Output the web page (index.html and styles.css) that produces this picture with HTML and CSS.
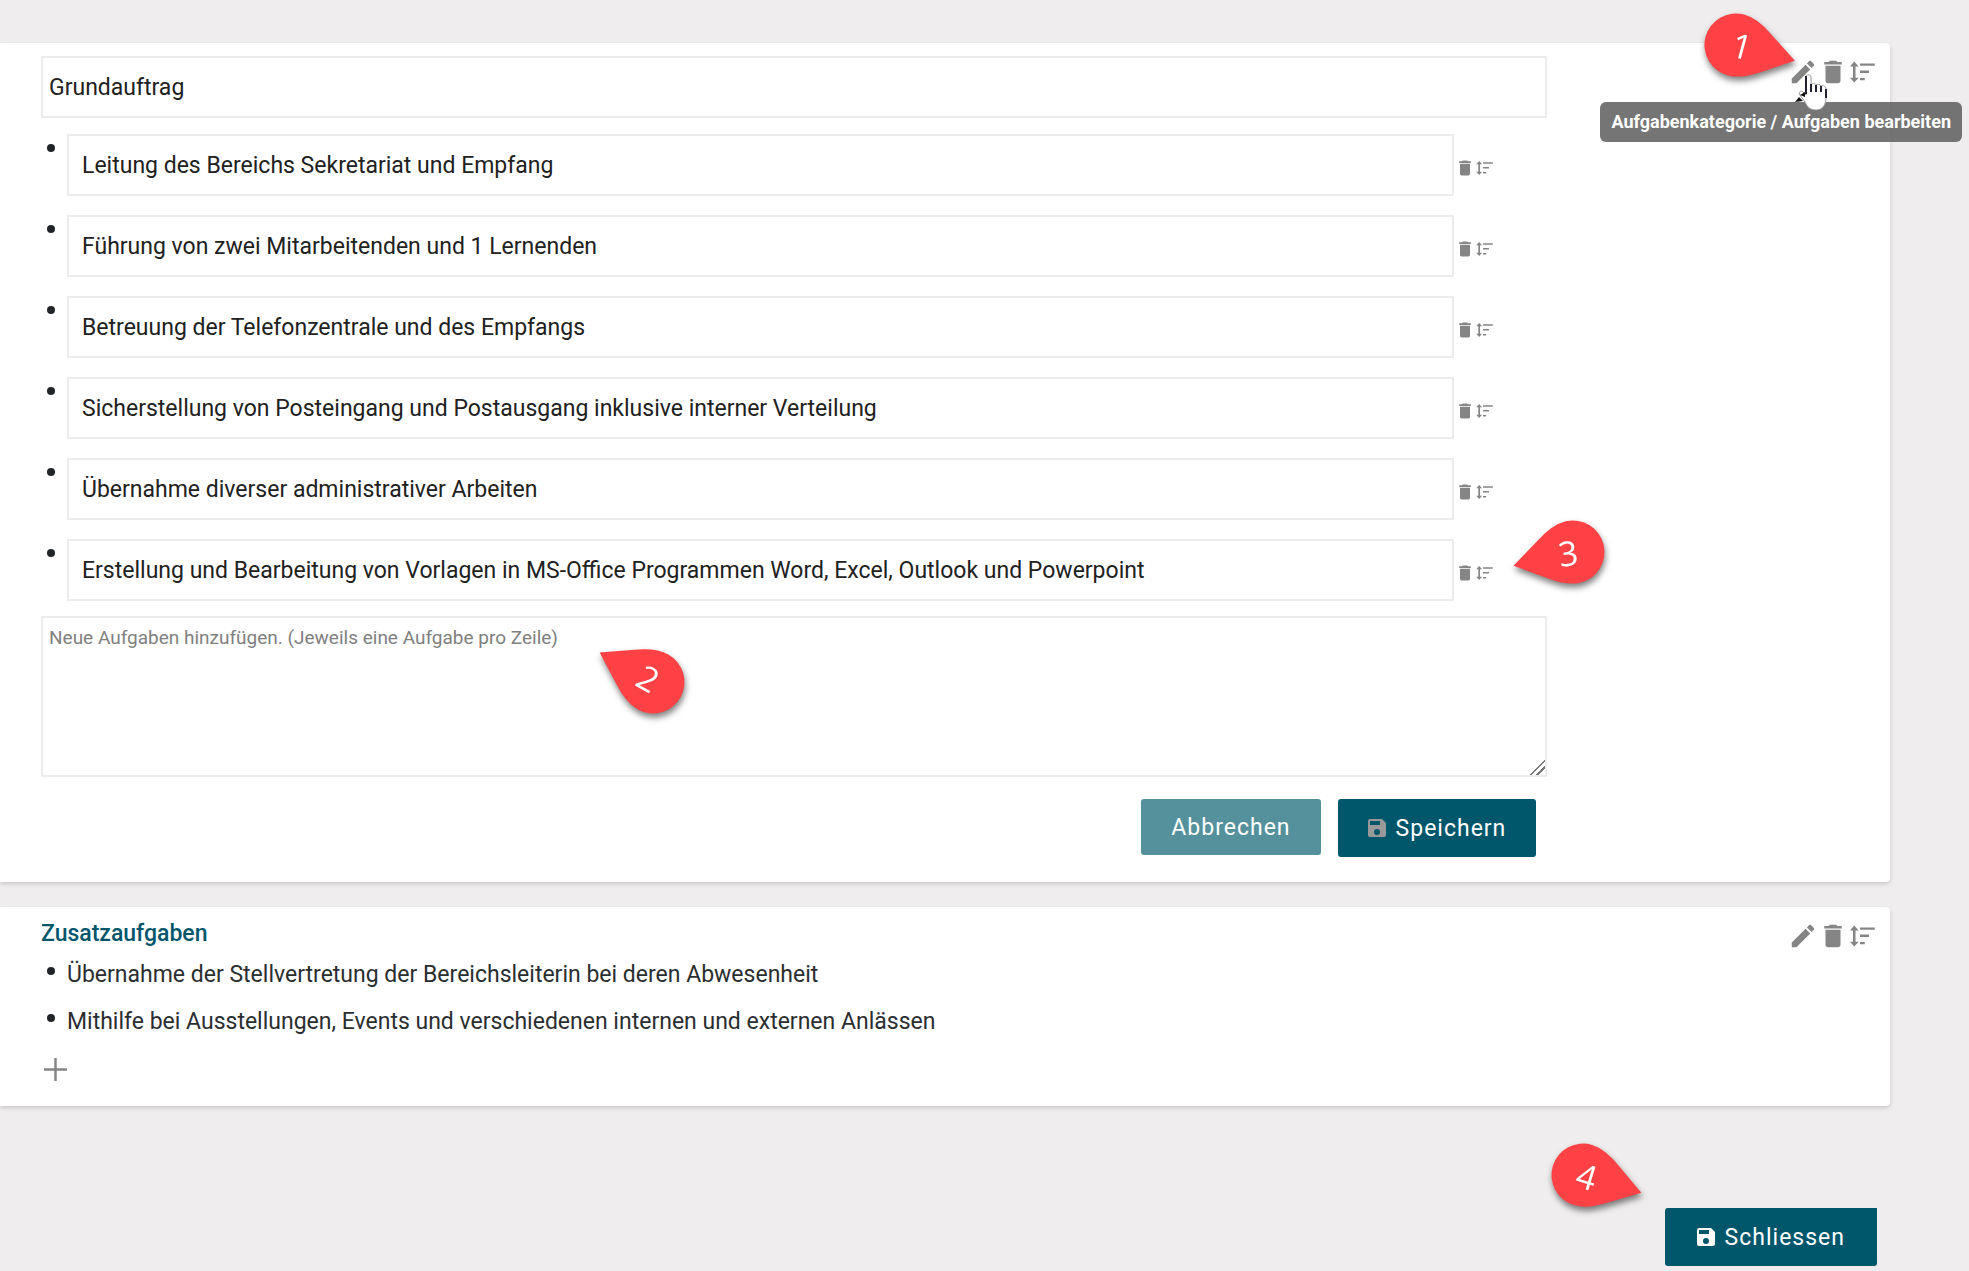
FILE: index.html
```
<!DOCTYPE html>
<html lang="de">
<head>
<meta charset="utf-8">
<title>Aufgaben</title>
<link rel="stylesheet" href="styles.css">
</head>
<body>

<!-- icons -->
<svg class="sprite" aria-hidden="true">
	<symbol id="i-edit" viewBox="0 0 24 24"><path d="M3 17.25V21h3.75L17.81 9.94l-3.75-3.75L3 17.25zM20.71 7.04a1 1 0 0 0 0-1.41l-2.34-2.34a1 1 0 0 0-1.41 0l-1.83 1.83 3.75 3.75 1.83-1.83z"/></symbol>
	<symbol id="i-delete" viewBox="0 0 24 24"><path d="M6 19c0 1.1.9 2 2 2h8c1.1 0 2-.9 2-2V7H6v12zM19 4h-3.500l-1-1h-5l-1 1H5v2h14V4z"/></symbol>
	<symbol id="i-sort" viewBox="0 0 24 24"><path d="M5 3.600L1.500 7.500h2.500v9H1.500L5 20.400l3.500-3.900H6V7.500h2.500zM9.600 5.100h11.800v1.900H9.600zM9.600 10.800h7.200v1.900H9.600zM9.600 16.700h3.800v1.900H9.600z"/></symbol>
	<symbol id="i-save" viewBox="3 3 18 18"><path d="M17 3H5a2 2 0 0 0-2 2v14c0 1.100.9 2 2 2h14c1.100 0 2-.9 2-2V7l-4-4zm-5 16a3 3 0 1 1 0-6 3 3 0 0 1 0 6zm3-10H5V5h10v4z"/></symbol>
	<symbol id="i-add" viewBox="0 0 24 24"><path d="M10.700 0h2.600v10.700H24v2.600H13.300V24h-2.600V13.300H0v-2.600h10.700z"/></symbol>
</svg>

<main class="page">
	<section class="card">
		<form class="edit">
			<input class="field title" type="text" aria-label="Aufgabenkategorie" value="Grundauftrag">
			<ul class="tasks">
				<li>
					<input class="field" type="text" aria-label="Aufgabe 1" value="Leitung des Bereichs Sekretariat und Empfang">
					<span class="tools small"><button type="button" aria-label="Löschen"><svg><use href="#i-delete"/></svg></button><button type="button" aria-label="Sortieren"><svg><use href="#i-sort"/></svg></button></span>
				</li>
				<li>
					<input class="field" type="text" aria-label="Aufgabe 2" value="Führung von zwei Mitarbeitenden und 1 Lernenden">
					<span class="tools small"><button type="button" aria-label="Löschen"><svg><use href="#i-delete"/></svg></button><button type="button" aria-label="Sortieren"><svg><use href="#i-sort"/></svg></button></span>
				</li>
				<li>
					<input class="field" type="text" aria-label="Aufgabe 3" value="Betreuung der Telefonzentrale und des Empfangs">
					<span class="tools small"><button type="button" aria-label="Löschen"><svg><use href="#i-delete"/></svg></button><button type="button" aria-label="Sortieren"><svg><use href="#i-sort"/></svg></button></span>
				</li>
				<li>
					<input class="field" type="text" aria-label="Aufgabe 4" value="Sicherstellung von Posteingang und Postausgang inklusive interner Verteilung">
					<span class="tools small"><button type="button" aria-label="Löschen"><svg><use href="#i-delete"/></svg></button><button type="button" aria-label="Sortieren"><svg><use href="#i-sort"/></svg></button></span>
				</li>
				<li>
					<input class="field" type="text" aria-label="Aufgabe 5" value="Übernahme diverser administrativer Arbeiten">
					<span class="tools small"><button type="button" aria-label="Löschen"><svg><use href="#i-delete"/></svg></button><button type="button" aria-label="Sortieren"><svg><use href="#i-sort"/></svg></button></span>
				</li>
				<li>
					<input class="field" type="text" aria-label="Aufgabe 6" value="Erstellung und Bearbeitung von Vorlagen in MS-Office Programmen Word, Excel, Outlook und Powerpoint">
					<span class="tools small"><button type="button" aria-label="Löschen"><svg><use href="#i-delete"/></svg></button><button type="button" aria-label="Sortieren"><svg><use href="#i-sort"/></svg></button></span>
				</li>
			</ul>
			<textarea class="field new" aria-label="Neue Aufgaben" placeholder="Neue Aufgaben hinzufügen. (Jeweils eine Aufgabe pro Zeile)"></textarea>
			<div class="actions">
				<button class="btn cancel" type="button">Abbrechen</button>
				<button class="btn save" type="button"><svg><use href="#i-save"/></svg>Speichern</button>
			</div>
		</form>
		<div class="tools">
			<button type="button" aria-label="Bearbeiten" aria-describedby="tip"><svg><use href="#i-edit"/></svg></button><button type="button" aria-label="Löschen"><svg><use href="#i-delete"/></svg></button><button type="button" aria-label="Sortieren"><svg><use href="#i-sort"/></svg></button>
		</div>
		<div class="tooltip" id="tip" role="tooltip">Aufgabenkategorie / Aufgaben bearbeiten</div>
	</section>

	<section class="card">
		<div class="view">
			<h2>Zusatzaufgaben</h2>
			<ul class="list">
				<li>Übernahme der Stellvertretung der Bereichsleiterin bei deren Abwesenheit</li>
				<li>Mithilfe bei Ausstellungen, Events und verschiedenen internen und externen Anlässen</li>
			</ul>
			<button class="add" type="button" aria-label="Hinzufügen"><svg><use href="#i-add"/></svg></button>
		</div>
		<div class="tools">
			<button type="button" aria-label="Bearbeiten"><svg><use href="#i-edit"/></svg></button><button type="button" aria-label="Löschen"><svg><use href="#i-delete"/></svg></button><button type="button" aria-label="Sortieren"><svg><use href="#i-sort"/></svg></button>
		</div>
	</section>

	<div class="bottom">
		<button class="btn close" type="button"><svg><use href="#i-save"/></svg>Schliessen</button>
	</div>
</main>

<!-- numbered pins, the drop turns towards its target -->
<svg class="pins" aria-hidden="true">
	<g class="pin" transform="translate(1736 45)"><path transform="rotate(15)" d="M61 0L32 -19Q14 -31.500 0 -31.500A31.500 31.500 0 0 0 0 31.500Q14 31.500 32 19Z"/><text transform="rotate(15)" x="6" y="12">1</text></g>
	<g class="pin" transform="translate(653 682)"><path transform="rotate(209)" d="M61 0L32 -19Q14 -31.500 0 -31.500A31.500 31.500 0 0 0 0 31.500Q14 31.500 32 19Z"/><text transform="rotate(29)" x="-6" y="12">2</text></g>
	<g class="pin" transform="translate(1573 552)"><path transform="rotate(167)" d="M61 0L32 -19Q14 -31.500 0 -31.500A31.500 31.500 0 0 0 0 31.500Q14 31.500 32 19Z"/><text transform="rotate(-8)" x="-5" y="13">3</text></g>
	<g class="pin" transform="translate(1583 1175)"><path transform="rotate(17)" d="M61 0L32 -19Q14 -31.500 0 -31.500A31.500 31.500 0 0 0 0 31.500Q14 31.500 32 19Z"/><text transform="rotate(17)" x="4" y="13">4</text></g>
	<!-- mouse pointer -->
	<g transform="translate(1796 73)">
		<path class="hand" d="M10 4c0-3 5-3 5 0v8c1-2 4-2 5 0 1-1 4-1 5 1 2-1 5 0 5 3v9c0 6-3 12-10 12s-9-4-11-8l-5-7c-2-3 1-5 3-3l3 3z"/>
		<path class="thumb" d="M9 19v5l-5-2zM3 24l4 4-8 1z"/>
		<path class="fingers" d="M10 3v18M15 11v8M20 12v7M25 13v6M30 16v9"/>
	</g>
</svg>

</body>
</html>
```
FILE: styles.css
```
* {
	box-sizing: border-box;
}
body {
	margin: 0;
	background: #efedee;
	color: #2b2e31;
	font-family: Roboto, "Liberation Sans", sans-serif;
	font-size: 23px;
	line-height: 28px;
}
button, input, textarea {
	font-family: inherit;
	font-size: inherit;
	color: inherit;
}
button {
	border: 0;
	padding: 0;
	background: none;
	cursor: pointer;
}
svg {
	display: block;
	fill: currentColor;
}
ul {
	margin: 0;
	padding: 0;
	list-style: none;
}
.sprite {
	position: absolute;
	width: 0;
	height: 0;
}
.page {
	padding: 43px 79px 0 0;
}
.card {
	position: relative;
	display: flex;
	justify-content: space-between;
	align-items: flex-start;
	margin-bottom: 25px;
	padding: 13px 12px 25px 41px;
	background: #fff;
	border-radius: 0 4px 4px 0;
	box-shadow: 0 2px 4px rgba(0, 0, 0, .16);
}

/* edit form */
.edit {
	width: 82%;
}
.field {
	display: block;
	width: 100%;
	height: 62px;
	padding: 0 13px;
	border: 2px solid #ececec;
	background: #fff;
	color: #212121;
}
.title {
	padding: 0 6px;
}
.tasks {
	display: flex;
	flex-direction: column;
	gap: 19px;
	margin: 16px 52px 15px 26px;
}
.tasks li {
	position: relative;
	display: flex;
	align-items: center;
}
.tasks .field {
	flex: 1;
}
.tasks li::before, .list li::before {
	content: "";
	position: absolute;
	left: -20px;
	top: 10px;
	width: 8px;
	height: 8px;
	border-radius: 50%;
	background: #212529;
}
.new {
	height: 161px;
	padding: 6px;
	font-size: 19px;
	line-height: 28px;
	resize: both;
}
.new::placeholder {
	color: #808080;
}
.new::-webkit-resizer {
	background: linear-gradient(135deg, transparent 47%, #777 47%, #777 54%, transparent 54%, transparent 70%, #777 70%, #777 77%, transparent 77%);
}
.actions {
	display: flex;
	align-items: flex-start;
	justify-content: flex-end;
	gap: 17px;
	padding: 22px 11px 0 0;
}

/* icon buttons */
.tools {
	display: flex;
	margin-top: 1px;
	color: #858585;
}
.tools svg {
	width: 30px;
	height: 30px;
}
.small {
	padding: 4px 0 0 1px;
}
.small svg {
	width: 20px;
	height: 20px;
}

.btn {
	display: flex;
	align-items: center;
	gap: 10px;
	height: 58px;
	padding: 0 30px;
	border-radius: 3px;
	background: #00566b;
	color: #fff;
	font-size: 23px;
	letter-spacing: 1px;
}
.btn svg {
	width: 18px;
	height: 18px;
}
.cancel {
	height: 56px;
	background: #55919d;
}
.save svg {
	color: #999;
}
.close {
	padding: 0 32px;
	border-top-right-radius: 0;
}

/* read view */
h2 {
	margin: 0;
	color: #00566b;
	font-size: 23px;
	font-weight: 500;
	line-height: 28px;
}
.list {
	padding-left: 26px;
}
.list li {
	position: relative;
	padding: 10px 0 3px;
	line-height: 34px;
}
.list li::before {
	top: 19px;
}
.add {
	display: block;
	margin: 16px 0 0 3px;
	color: #858585;
}
.add svg {
	width: 23px;
	height: 23px;
}
.bottom {
	display: flex;
	justify-content: flex-end;
	padding: 77px 13px 5px 0;
}

.tooltip {
	position: absolute;
	top: 59px;
	right: -72px;
	padding: 6px 11px;
	border-radius: 6px;
	background: rgba(97, 97, 97, .87);
	color: #fff;
	font-size: 18px;
	font-weight: 700;
	line-height: 28px;
}

.pins {
	position: absolute;
	top: 0;
	left: 0;
	width: 100%;
	height: 100%;
	pointer-events: none;
}
.pin path {
	fill: #fd4144;
}
.pin {
	filter: drop-shadow(1px 4px 3px rgba(0, 0, 0, .5));
}
.pin text {
	fill: #fff;
	font-family: "Open Sans", sans-serif;
	font-size: 34px;
	text-anchor: middle;
}
.hand {
	fill: #fff;
	stroke: #999;
	stroke-width: 1;
}
.thumb {
	fill: #111;
}
.fingers {
	fill: none;
	stroke: #223;
	stroke-width: 2;
}
```
